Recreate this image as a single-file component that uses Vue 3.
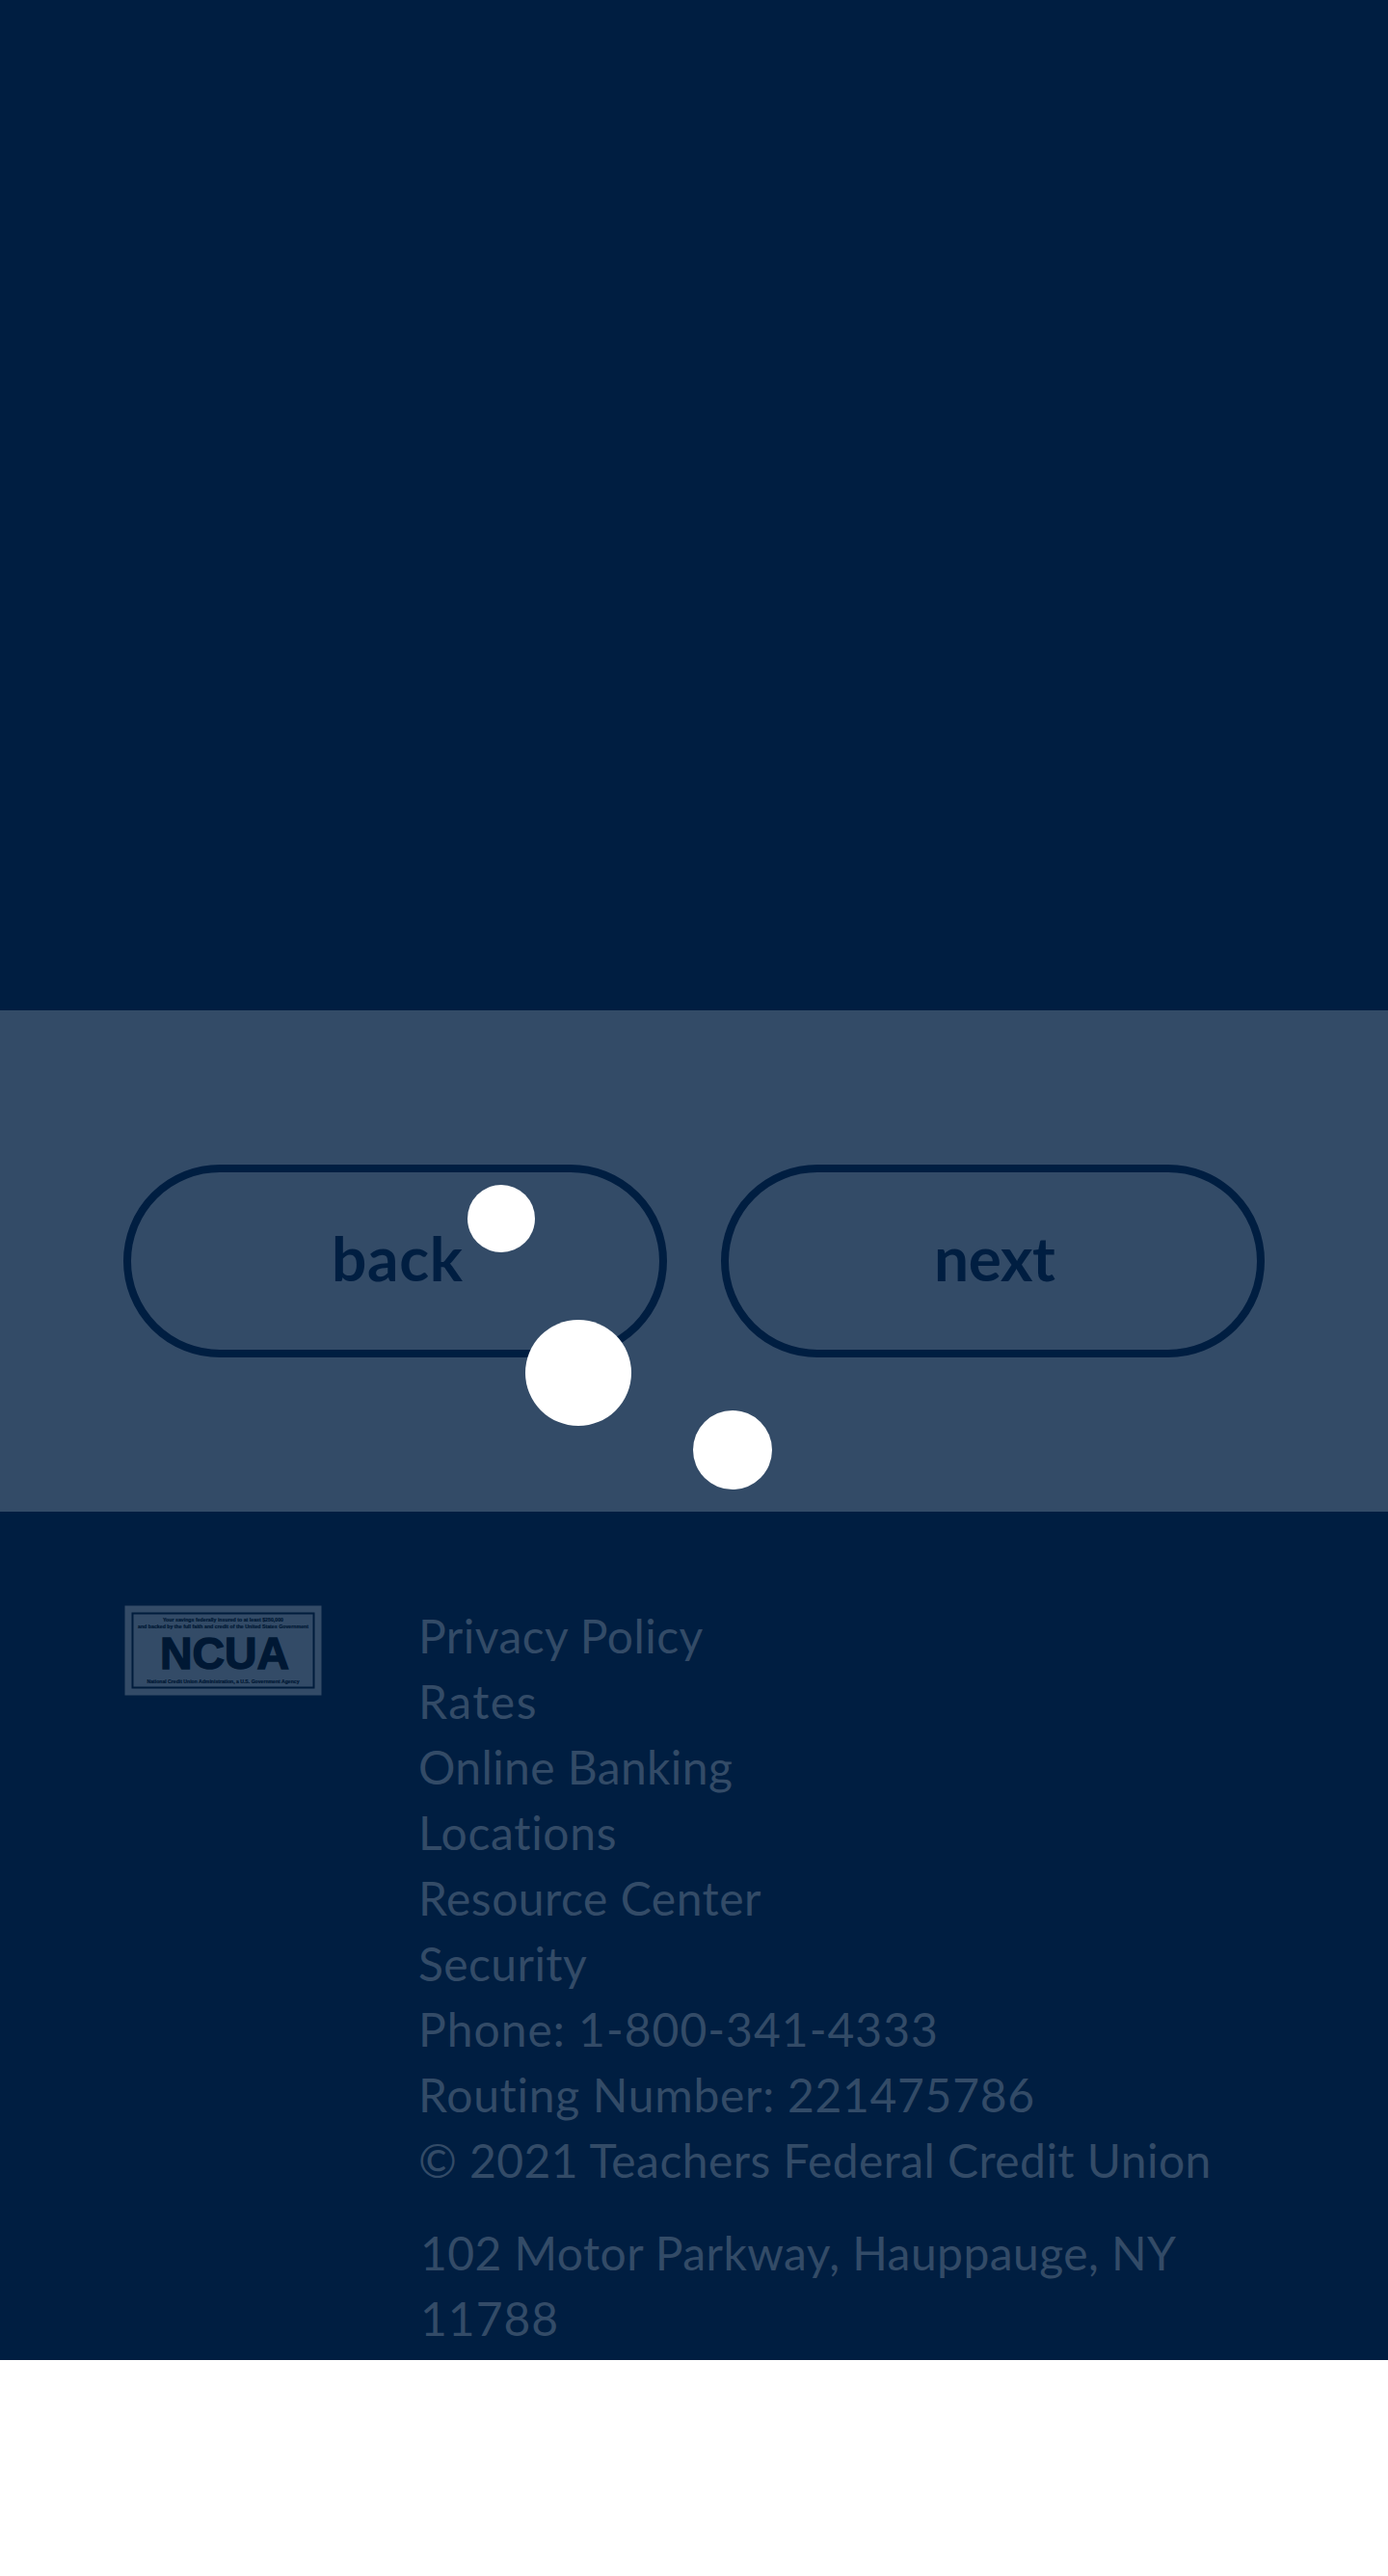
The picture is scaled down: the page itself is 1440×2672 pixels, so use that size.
<script setup>
const actions = [
  { label: 'back', inset: 208, spacing: 0.7 },
  { label: 'next', inset: 213, spacing: -0.4 },
]

const links = [
  { text: 'Privacy Policy', spacing: 0.45 },
  { text: 'Rates', spacing: 1.5 },
  { text: 'Online Banking', spacing: 0.38 },
  { text: 'Locations', spacing: 0.67 },
  { text: 'Resource Center', spacing: 0.5 },
  { text: 'Security', spacing: 0.4 },
  { text: 'Phone: 1-800-341-4333', spacing: 1 },
  { text: 'Routing Number: 221475786', spacing: 0.7 },
  { text: '© 2021 Teachers Federal Credit Union', spacing: 0.43 },
]

const address = [
  { text: '102 Motor Parkway, Hauppauge, NY', spacing: 0.43 },
  { text: '11788', spacing: 1 },
]
</script>

<template>
  <div class="page">
    <main class="hero"></main>

    <nav class="actions">
      <button
        v-for="a in actions"
        :key="a.label"
        type="button"
        class="pill"
        :style="{ paddingLeft: a.inset + 'px', letterSpacing: a.spacing + 'px' }"
      >{{ a.label }}</button>
    </nav>

    <footer class="footer">
      <svg class="badge" viewBox="0 0 205 94" width="205" height="94" role="img">
        <rect x="0.5" y="0.5" width="204" height="93" fill="#334b67" />
        <rect x="8.5" y="8.5" width="188" height="77" fill="none" stroke="#001c3c" stroke-width="2" />
        <g fill="#001834" font-family="'Liberation Sans', sans-serif" font-weight="700" text-anchor="middle">
          <g font-size="5.2" stroke="#001834" stroke-width="0.2">
            <text x="102.5" y="17" textLength="125" lengthAdjust="spacingAndGlyphs">Your savings federally insured to at least $250,000</text>
            <text x="102.5" y="24" textLength="177" lengthAdjust="spacingAndGlyphs">and backed by the full faith and credit of the United States Government</text>
            <text x="102.5" y="80.5" textLength="158" lengthAdjust="spacingAndGlyphs">National Credit Union Administration, a U.S. Government Agency</text>
          </g>
          <text x="104" y="66" font-size="46" textLength="134" lengthAdjust="spacingAndGlyphs" stroke="#001834" stroke-width="1.4">NCUA</text>
        </g>
      </svg>
      <div class="info">
        <ul class="links">
          <li v-for="l in links" :key="l.text" :style="{ letterSpacing: l.spacing + 'px' }">{{ l.text }}</li>
        </ul>
        <address class="address">
          <span v-for="l in address" :key="l.text" :style="{ letterSpacing: l.spacing + 'px' }">{{ l.text }}</span>
        </address>
      </div>
    </footer>

    <div class="loader">
      <i class="dot dot-a"></i>
      <i class="dot dot-b"></i>
      <i class="dot dot-c"></i>
    </div>
  </div>
</template>

<style>
body {
  margin: 0;
  background: #fff;
}
</style>

<style scoped>
.page {
  position: relative;
  width: 1440px;
  height: 2672px;
  background: #fff;
  font-family: Lato, sans-serif;
}
.hero {
  height: 1048px;
  background: #001e41;
}
.actions {
  box-sizing: border-box;
  display: flex;
  gap: 56px;
  height: 520px;
  padding: 160px 128px;
  background: #334b67;
}
.pill {
  box-sizing: border-box;
  flex: none;
  width: 564px;
  height: 200px;
  padding: 49px 0 55px;
  border: 8px solid #001e41;
  border-radius: 100px;
  background: transparent;
  color: #001e41;
  font: 700 64px/80px Lato, sans-serif;
  text-align: left;
}
.footer {
  box-sizing: border-box;
  display: flex;
  align-items: flex-start;
  height: 880px;
  padding: 95px 128px 0 129px;
  background: #001e41;
}
.badge {
  flex: none;
  margin-top: 2px;
  overflow: visible;
}
.info {
  margin-left: 100px;
  color: #334b67;
  font-size: 48px;
  line-height: 68px;
  white-space: nowrap;
}
.links {
  margin: 0;
  padding: 0;
  list-style: none;
}
.address {
  display: flex;
  flex-direction: column;
  margin-top: 28px;
  padding-left: 2px;
  font-style: normal;
}
.dot {
  position: absolute;
  border-radius: 50%;
  background: #fff;
}
.dot-a {
  left: 485px;
  top: 1229px;
  width: 70px;
  height: 70px;
}
.dot-b {
  left: 545px;
  top: 1369px;
  width: 110px;
  height: 110px;
}
.dot-c {
  left: 719px;
  top: 1463px;
  width: 82px;
  height: 82px;
}
</style>
